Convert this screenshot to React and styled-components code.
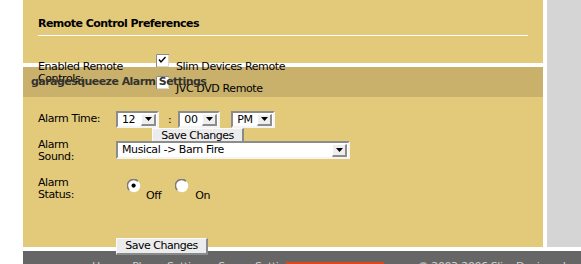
import React from 'react';
import styled, { createGlobalStyle } from 'styled-components';

const GlobalStyle = createGlobalStyle`
  html, body { margin: 0; padding: 0; background: #fff; }
  body {
    font-family: "DejaVu Sans", Verdana, sans-serif;
    font-size: 11px;
    line-height: 12px;
    color: #000;
    letter-spacing: -0.4px;
  }
`;

const Page = styled.div`
  padding-left: 23px;
`;

const Columns = styled.div`
  display: flex;
  gap: 4px;
  height: 247px;
`;

const Main = styled.div`
  width: 520px;
  flex: none;
  background: #fff;
`;

const Sidebar = styled.div`
  flex: 1;
  background: #d5d5d5;
`;

const Prefs = styled.section`
  box-sizing: border-box;
  height: 63px;
  background: #e3c97a;
  padding: 18px 15px 0;
`;

const PrefsTitle = styled.div`
  font-weight: bold;
  letter-spacing: -0.55px;
`;

const Rule = styled.div`
  height: 1px;
  background: #fff;
  margin-top: 5px;
`;

const RemoteRow = styled.div`
  display: flex;
  margin-top: 18px;
`;

const RemoteLabel = styled.div`
  width: 118px;
  flex: none;
  padding-top: 7px;
`;

const OptionList = styled.div`
  display: flex;
  flex-direction: column;
  gap: 3px;
`;

const Option = styled.div`
  display: flex;
  align-items: flex-start;
`;

const OptionText = styled.span`
  margin: 7px 0 0 7px;
  white-space: nowrap;
`;

const CheckBox = styled.span`
  display: block;
  width: 13px;
  height: 13px;
  flex: none;
  svg { display: block; }
`;

const Band = styled.div`
  box-sizing: border-box;
  height: 30px;
  margin-top: 4px;
  background: #c9b06b;
  padding: 9px 8px 0;
`;

const BandTitle = styled.h2`
  margin: 0;
  font-size: 11px;
  line-height: 12px;
  font-weight: bold;
  letter-spacing: -0.55px;
  color: #35332f;
  white-space: nowrap;
`;

const Alarm = styled.section`
  box-sizing: border-box;
  height: 150px;
  background: #e3c97a;
  padding: 14px 15px 0;
`;

const FormRow = styled.div`
  display: flex;
  align-items: flex-start;
  height: ${(p) => p.$h}px;
`;

const FieldLabel = styled.div`
  width: 78px;
  flex: none;
  margin-top: ${(p) => p.$offset}px;
  white-space: nowrap;
`;

const Field = styled.div`
  display: flex;
  flex-direction: column;
  align-items: flex-start;
`;

const TimeRow = styled.div`
  display: flex;
  align-items: center;
`;

const Colon = styled.span`
  margin: 0 7px 0 9px;
`;

const Gap = styled.span`
  width: 11px;
`;

const SelectBox = styled.span`
  display: inline-flex;
  align-items: center;
  justify-content: space-between;
  box-sizing: border-box;
  width: ${(p) => p.$w}px;
  height: ${(p) => p.$h}px;
  border: 2px solid;
  border-color: #8c8c8c #f4f4f4 #f4f4f4 #8c8c8c;
  background: #fff;
  padding: 0 1px 0 4px;
  white-space: nowrap;
`;

const SelectArrow = styled.span`
  box-sizing: border-box;
  width: 15px;
  height: ${(p) => p.$h}px;
  background: #eeeeee;
  border-top: 1px solid #fff;
  border-left: 1px solid #fff;
  border-right: 2px solid #8c8c8c;
  border-bottom: 2px solid #8c8c8c;
  display: flex;
  align-items: center;
  justify-content: center;
  svg { display: block; }
`;

const SaveButton = styled.button`
  box-sizing: border-box;
  width: 92px;
  height: 17px;
  margin: 0 0 0 ${(p) => p.$left}px;
  padding: 0;
  font-family: inherit;
  font-size: 11px;
  line-height: 12px;
  letter-spacing: -0.5px;
  color: #000;
  background: #ececec;
  border: 1px solid;
  border-color: #fbfbfb #8a8a8a #8a8a8a #fbfbfb;
  border-right-width: 2px;
  border-bottom-width: 2px;
  position: ${(p) => (p.$raised ? 'relative' : 'static')};
  z-index: ${(p) => (p.$raised ? 1 : 'auto')};
`;

const RadioGroup = styled.div`
  display: flex;
  margin-left: 11px;
  gap: 14px;
`;

const RadioOption = styled.div`
  display: flex;
  align-items: flex-start;
`;

const RadioDot = styled.span`
  display: block;
  width: 14px;
  height: 14px;
  svg { display: block; }
`;

const RadioText = styled.span`
  margin: 11px 0 0 ${(p) => p.$gap}px;
`;

const ButtonBar = styled.div`
  padding-left: 78px;
`;

const Footer = styled.footer`
  margin-top: 4px;
  height: 40px;
  background: #666;
  color: #d0d0d0;
  display: flex;
  align-items: flex-start;
  padding-top: 10px;
  box-sizing: border-box;
`;

const FooterNav = styled.div`
  width: 216px;
  padding-left: 69px;
  box-sizing: content-box;
  white-space: nowrap;
  overflow: hidden;
`;

const SearchBox = styled.div`
  width: 108px;
  height: 14px;
  margin-top: 1px;
  background: #dc4a1c;
`;

const Copyright = styled.div`
  margin-left: 34px;
  white-space: nowrap;
`;

function Check({ checked }) {
  return (
    <CheckBox>
      <svg width="13" height="13" viewBox="0 0 13 13">
        <rect x="0" y="0" width="13" height="13" fill="#fff" />
        <path d="M0.5 13V0.5H13" fill="none" stroke="#8a8a8a" strokeWidth="1" />
        <path d="M12.5 1V12.5H1" fill="none" stroke="#d8d8d8" strokeWidth="1" />
        {checked && (
          <path d="M3 5.5L5 8L9.5 3" fill="none" stroke="#000" strokeWidth="1.4" />
        )}
      </svg>
    </CheckBox>
  );
}

function Select({ value, w, h = 17 }) {
  return (
    <SelectBox $w={w} $h={h}>
      <span>{value}</span>
      <SelectArrow $h={h - 5}>
        <svg width="7" height="4" viewBox="0 0 7 4">
          <path d="M0 0H7L3.5 4Z" fill="#000" />
        </svg>
      </SelectArrow>
    </SelectBox>
  );
}

function Radio({ checked }) {
  return (
    <RadioDot>
      <svg width="14" height="14" viewBox="0 0 14 14">
        <circle cx="7" cy="7" r="6.2" fill="#fff" />
        <path d="M2.2 11 A6 6 0 0 1 11 2.2" fill="none" stroke="#7c7c7c" strokeWidth="1.6" />
        {checked && <circle cx="6.6" cy="6.6" r="2.1" fill="#000" />}
      </svg>
    </RadioDot>
  );
}

export default function App() {
  return (
    <>
      <GlobalStyle />
      <Page>
        <Columns>
          <Main>
            <Prefs>
              <PrefsTitle>Remote Control Preferences</PrefsTitle>
              <Rule />
              <RemoteRow>
                <RemoteLabel>
                  Enabled Remote
                  <br />
                  Controls:
                </RemoteLabel>
                <OptionList>
                  <Option>
                    <Check checked />
                    <OptionText>Slim Devices Remote</OptionText>
                  </Option>
                  <Option>
                    <Check />
                    <OptionText>JVC DVD Remote</OptionText>
                  </Option>
                </OptionList>
              </RemoteRow>
            </Prefs>
            <Band>
              <BandTitle>garagesqueeze Alarm Settings</BandTitle>
            </Band>
            <Alarm>
              <FormRow $h={30}>
                <FieldLabel $offset={2}>Alarm Time:</FieldLabel>
                <Field>
                  <TimeRow>
                    <Select value="12" w={43} />
                    <Colon>:</Colon>
                    <Select value="00" w={42} />
                    <Gap />
                    <Select value="PM" w={44} />
                  </TimeRow>
                  <SaveButton $left={36}>Save Changes</SaveButton>
                </Field>
              </FormRow>
              <FormRow $h={38}>
                <FieldLabel $offset={-2}>
                  Alarm
                  <br />
                  Sound:
                </FieldLabel>
                <Field>
                  <Select value="Musical -> Barn Fire" w={234} h={18} />
                </Field>
              </FormRow>
              <FormRow $h={59}>
                <FieldLabel $offset={-2}>
                  Alarm
                  <br />
                  Status:
                </FieldLabel>
                <RadioGroup>
                  <RadioOption>
                    <Radio checked />
                    <RadioText $gap={5}>Off</RadioText>
                  </RadioOption>
                  <RadioOption>
                    <Radio />
                    <RadioText $gap={6}>On</RadioText>
                  </RadioOption>
                </RadioGroup>
              </FormRow>
              <ButtonBar>
                <SaveButton $left={0} $raised>
                  Save Changes
                </SaveButton>
              </ButtonBar>
            </Alarm>
          </Main>
          <Sidebar />
        </Columns>
        <Footer>
          <FooterNav>Home · Player Settings · Server Settings · Help</FooterNav>
          <SearchBox />
          <Copyright>© 2003-2006 Slim Devices, Inc.</Copyright>
        </Footer>
      </Page>
    </>
  );
}
